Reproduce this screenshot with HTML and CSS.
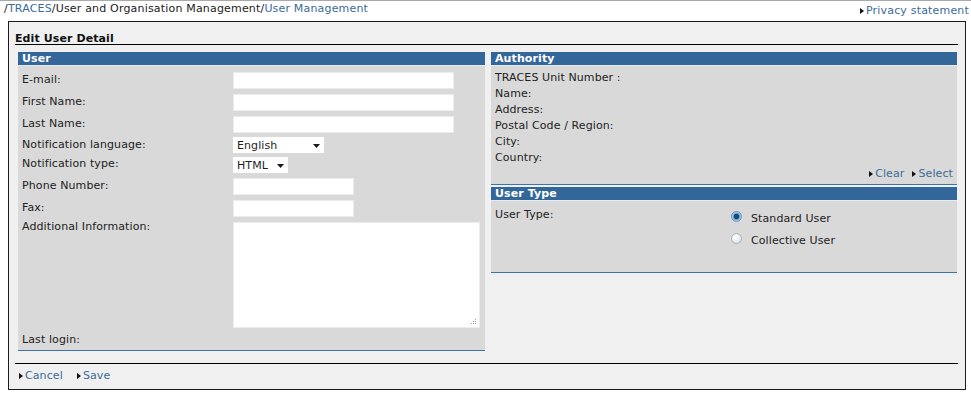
FILE: index.html
```html
<!DOCTYPE html>
<html lang="en">
<head>
<meta charset="utf-8">
<title>Edit User Detail</title>
<link rel="stylesheet" href="styles.css">
</head>
<body>
<div class="topbar">
  <div class="crumbs"><span>/</span><a class="link" href="#">TRACES</a><span>/User and Organisation Management/</span><a class="link" href="#">User Management</a></div>
  <a class="action" href="#">Privacy statement</a>
</div>
<div class="frame">
  <div class="title">Edit User Detail</div>
  <div class="panels">
    <section class="panel">
      <h2 class="panel-head">User</h2>
      <div class="panel-body user-body">
        <div class="row"><label class="lbl">E-mail:</label><input class="inp wide" type="text"></div>
        <div class="row"><label class="lbl">First Name:</label><input class="inp wide" type="text"></div>
        <div class="row"><label class="lbl">Last Name:</label><input class="inp wide" type="text"></div>
        <div class="row short"><label class="lbl">Notification language:</label><div class="select sel-lang"><span>English</span><svg class="arrow" width="7" height="4" viewBox="0 0 7 4"><path d="M0 0H7L3.5 4Z" fill="#1a1a1a"/></svg></div></div>
        <div class="row short"><label class="lbl lbl-up">Notification type:</label><div class="select sel-type"><span>HTML</span><svg class="arrow" width="7" height="4" viewBox="0 0 7 4"><path d="M0 0H7L3.5 4Z" fill="#1a1a1a"/></svg></div></div>
        <div class="row"><label class="lbl">Phone Number:</label><input class="inp narrow" type="text"></div>
        <div class="row"><label class="lbl">Fax:</label><input class="inp narrow" type="text"></div>
        <div class="row tall"><label class="lbl">Additional Information:</label>
          <div class="ta-wrap"><textarea class="ta"></textarea><svg class="grip" width="7" height="7" viewBox="0 0 7 7"><g fill="#9a9a9a"><rect x="5" y="1" width="1" height="1"/><rect x="3" y="3" width="1" height="1"/><rect x="5" y="3" width="1" height="1"/><rect x="1" y="5" width="1" height="1"/><rect x="3" y="5" width="1" height="1"/><rect x="5" y="5" width="1" height="1"/></g></svg></div>
        </div>
        <div class="row last"><label class="lbl">Last login:</label></div>
      </div>
    </section>
    <div class="right-col">
      <section class="panel">
        <h2 class="panel-head">Authority</h2>
        <div class="panel-body auth-body">
          <div class="line">TRACES Unit Number :</div>
          <div class="line">Name:</div>
          <div class="line">Address:</div>
          <div class="line">Postal Code / Region:</div>
          <div class="line">City:</div>
          <div class="line">Country:</div>
          <div class="line actions"><a class="action" href="#">Clear</a><a class="action" href="#">Select</a></div>
        </div>
      </section>
      <section class="panel type-panel">
        <h2 class="panel-head">User Type</h2>
        <div class="panel-body type-body">
          <div class="type-label">User Type:</div>
          <div class="options">
            <div class="opt"><span class="radio checked"></span>Standard User</div>
            <div class="opt"><span class="radio"></span>Collective User</div>
          </div>
        </div>
      </section>
    </div>
  </div>
  <div class="footer"><a class="action" href="#">Cancel</a><a class="action" href="#">Save</a></div>
</div>
</body>
</html>
```
FILE: styles.css
```css
body {
  margin: 0;
  background: #ffffff;
  font-family: "DejaVu Sans", Verdana, sans-serif;
  font-size: 11px;
  letter-spacing: 0.1px;
  color: #222222;
}

a { text-decoration: none; }

.topbar {
  display: flex;
  justify-content: space-between;
  border-top: 1px solid #a9a9a9;
  height: 20px;
  line-height: 16px;
  padding: 0 2px 0 4px;
  letter-spacing: 0.18px;
}

.link { color: #3b6b9a; }

.action {
  display: inline-flex;
  align-items: center;
  gap: 2px;
  color: #3b6b9a;
}

.action::before {
  content: "";
  width: 0;
  height: 0;
  border-left: 4px solid #111;
  border-top: 3.5px solid transparent;
  border-bottom: 3.5px solid transparent;
}

.frame {
  margin-left: 8px;
  width: 958px;
  box-sizing: border-box;
  border: 1px solid #1c1c1c;
  background: #f0f0f0;
  padding: 0 7px 5px 6px;
}

.title {
  height: 10px;
  line-height: 10px;
  padding-top: 12px;
  font-weight: bold;
  color: #111;
  border-bottom: 1px solid #000;
}

.panels {
  display: grid;
  grid-template-columns: 467px 466px;
  column-gap: 6px;
  margin: 7px 1px 0 3px;
  align-items: start;
}

.panel-head {
  margin: 0;
  height: 13px;
  line-height: 13px;
  font-size: 11px;
  font-weight: bold;
  color: #ffffff;
  background: #336699;
  padding-left: 4px;
  border-bottom: 1px solid #e4ecf3;
}

.panel-body {
  background: #d9d9d9;
  border-bottom: 1px solid #3e73a5;
}

.user-body { padding: 3px 0 1px 4px; }

.row {
  display: flex;
  align-items: center;
  height: 22px;
}
.row.short { height: 20px; }
.row.tall { height: 112px; align-items: flex-start; }
.row.last { height: 18px; }

.lbl {
  width: 211px;
  flex: none;
  line-height: 16px;
}
.lbl-up { margin-top: -3px; }

.inp {
  box-sizing: border-box;
  height: 17px;
  margin: 0;
  padding: 0 3px;
  border: 1px solid #ececec;
  background: #ffffff;
  font: inherit;
}
.inp.wide { width: 221px; }
.inp.narrow { width: 121px; }

.select {
  box-sizing: border-box;
  height: 16px;
  background: #ffffff;
  display: flex;
  align-items: center;
  justify-content: space-between;
  padding: 0 4px;
  color: #1e1e1e;
}
.sel-lang { width: 91px; }
.sel-type { width: 55px; }
.arrow { margin-top: 2px; }

.ta-wrap {
  position: relative;
  margin-top: 3px;
  width: 247px;
  height: 106px;
}
.ta {
  display: block;
  box-sizing: border-box;
  width: 247px;
  height: 106px;
  margin: 0;
  border: 1px solid #ececec;
  background: #ffffff;
  resize: none;
  font: inherit;
}
.grip {
  position: absolute;
  right: 3px;
  bottom: 3px;
}

.auth-body { padding: 4px 4px 2px 4px; }
.line { line-height: 16px; height: 16px; }
.line.actions {
  display: flex;
  justify-content: flex-end;
  gap: 8px;
}

.type-panel { margin-top: 2px; }
.type-body {
  display: grid;
  grid-template-columns: 236px 1fr;
  padding: 6px 0 21px 4px;
}
.type-label { line-height: 16px; }
.opt {
  display: flex;
  align-items: center;
  height: 22px;
}

.radio {
  width: 11px;
  height: 11px;
  box-sizing: border-box;
  border-radius: 50%;
  border: 1px solid #a7b2bc;
  background: radial-gradient(circle at 40% 35%, #ffffff 0, #eef1f4 45%, #cfd6dd 100%);
  margin: -3px 9px 0 0;
}
.radio.checked {
  border-color: #6b93b6;
  background: radial-gradient(circle, #0f4d7e 0, #0f4d7e 2.2px, #5f98c6 3px, #b9d5ec 4.5px, #e6f0f8 5.5px);
}

.footer {
  display: flex;
  gap: 14px;
  margin-top: 12px;
  border-top: 1px solid #000;
  padding: 4px 0 0 4px;
  line-height: 16px;
}
```
